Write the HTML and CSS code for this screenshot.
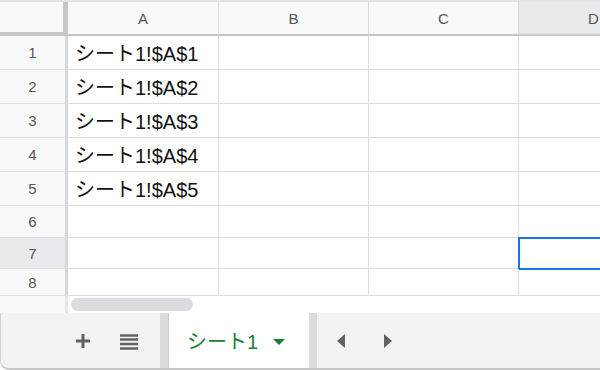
FILE: index.html
```html
<!DOCTYPE html>
<html lang="ja">
<head>
    <meta charset="UTF-8">
    <title>シート1</title>
    <link rel="stylesheet" href="styles.css">
</head>
<body>
    <div class="app">
        <div class="sheet">
            <div class="row head-row">
                <div class="corner"></div>
                <div class="col-head col-a">A</div>
                <div class="col-head">B</div>
                <div class="col-head">C</div>
                <div class="col-head col-d active">D</div>
            </div>
            <div class="row tall">
                <div class="row-head">1</div>
                <div class="cell col-a">シート1!$A$1</div>
                <div class="cell"></div>
                <div class="cell"></div>
                <div class="cell col-d"></div>
            </div>
            <div class="row tall">
                <div class="row-head">2</div>
                <div class="cell col-a">シート1!$A$2</div>
                <div class="cell"></div>
                <div class="cell"></div>
                <div class="cell col-d"></div>
            </div>
            <div class="row tall">
                <div class="row-head">3</div>
                <div class="cell col-a">シート1!$A$3</div>
                <div class="cell"></div>
                <div class="cell"></div>
                <div class="cell col-d"></div>
            </div>
            <div class="row tall">
                <div class="row-head">4</div>
                <div class="cell col-a">シート1!$A$4</div>
                <div class="cell"></div>
                <div class="cell"></div>
                <div class="cell col-d"></div>
            </div>
            <div class="row tall">
                <div class="row-head">5</div>
                <div class="cell col-a">シート1!$A$5</div>
                <div class="cell"></div>
                <div class="cell"></div>
                <div class="cell col-d"></div>
            </div>
            <div class="row r6">
                <div class="row-head">6</div>
                <div class="cell col-a"></div>
                <div class="cell"></div>
                <div class="cell"></div>
                <div class="cell col-d"></div>
            </div>
            <div class="row r7">
                <div class="row-head active">7</div>
                <div class="cell col-a"></div>
                <div class="cell"></div>
                <div class="cell"></div>
                <div class="cell col-d selected"></div>
            </div>
            <div class="row r8">
                <div class="row-head">8</div>
                <div class="cell col-a"></div>
                <div class="cell"></div>
                <div class="cell"></div>
                <div class="cell col-d"></div>
            </div>
            <div class="scroll-row">
                <div class="scroll-gutter"></div>
                <div class="scroll-track">
                    <div class="scroll-thumb"></div>
                </div>
            </div>
        </div>

        <div class="tabbar">
            <button class="tool add" title="シートを追加">
                <svg width="16" height="16" viewBox="0 0 16 16"><path d="M8 1v14M1 8h14" stroke="#5f6368" stroke-width="3" fill="none"/></svg>
            </button>
            <button class="tool list" title="すべてのシート">
                <svg width="18" height="16" viewBox="0 0 18 16"><path d="M0 1.5h18M0 5.5h18M0 10h18M0 14.5h18" stroke="#5f6368" stroke-width="2.6" fill="none"/></svg>
            </button>
            <div class="tab">
                <span class="tab-name">シート1</span>
                <svg class="caret" width="12" height="6" viewBox="0 0 12 6"><path d="M0 0h12L6 6z" fill="#188038"/></svg>
            </div>
            <div class="nav-arrows">
                <button class="tool arrow">
                    <svg width="9" height="14" viewBox="0 0 9 14"><path d="M9 0v14L1 7z" fill="#5f6368"/></svg>
                </button>
                <button class="tool arrow">
                    <svg width="9" height="14" viewBox="0 0 9 14"><path d="M0 0v14l8-7z" fill="#5f6368"/></svg>
                </button>
            </div>
        </div>
    </div>
</body>
</html>
```

FILE: styles.css
```css
body {
    margin: 0;
    width: 600px;
    height: 370px;
    overflow: hidden;
    background-color: #fff;
    font-family: 'Liberation Sans', 'Noto Sans CJK JP', sans-serif;
}
.app {
    display: flex;
    flex-direction: column;
    height: 370px;
}
.sheet {
    height: 313px;
    border-top: 2px solid #e3e3e3;
    box-sizing: border-box;
    overflow: hidden;
}
.row {
    display: flex;
    height: 34px;
}
.head-row {
    height: 34px;
}
.r6 {
    height: 32px;
}
.r7 {
    height: 31px;
}
.r8 {
    height: 26px;
}
.corner {
    flex: none;
    width: 63px;
    background-color: #f8f9fa;
    border-right: 5px solid #c4c7c5;
    border-bottom: 4px solid #c4c7c5;
}
.col-head {
    flex: none;
    width: 149px;
    background-color: #f8f9fa;
    border-right: 1px solid #dadce0;
    border-bottom: 2px solid #c4c7c5;
    display: flex;
    align-items: center;
    justify-content: center;
    font-size: 15px;
    color: #555;
}
.col-head.col-a {
    width: 150px;
}
.col-head.col-d {
    width: 150px;
    border-right: none;
    justify-content: flex-start;
    padding-left: 69px;
}
.active {
    background-color: #e8eaed;
}
.row-head {
    flex: none;
    width: 65px;
    background-color: #f8f9fa;
    border-right: 3px solid #d6d8db;
    border-bottom: 1px solid #dedede;
    display: flex;
    align-items: center;
    justify-content: center;
    font-size: 15px;
    color: #555;
}
.row-head.active {
    background-color: #e8eaed;
}
.cell {
    flex: none;
    border-right: 1px solid #dedede;
    border-bottom: 1px solid #dedede;
    display: flex;
    align-items: center;
    padding-left: 7px;
    box-sizing: border-box;
    width: 150px;
    font-size: 20px;
    color: #111;
    white-space: nowrap;
}
.cell.col-a {
    width: 151px;
}
.cell.col-d {
    width: 90px;
    border-right: none;
}
.r8 .row-head,
.r8 .cell {
    border-bottom: none;
}
.selected {
    outline: 2px solid #1a73e8;
    outline-offset: -1px;
}
.scroll-row {
    display: flex;
    height: 18px;
    border-top: 1px solid #dedede;
}
.scroll-gutter {
    width: 65px;
    background-color: #f8f9fa;
    border-right: 3px solid #e6e7e9;
}
.scroll-track {
    flex: 1;
    padding: 2px 0 0 3px;
}
.scroll-thumb {
    width: 122px;
    height: 13px;
    border-radius: 7px;
    background-color: #dadce0;
}
.tabbar {
    flex: 1;
    display: flex;
    align-items: stretch;
    background-color: #f1f3f4;
    border-bottom: 2px solid #c6c6c6;
    border-left: 1px solid #d0d0d0;
    border-bottom-left-radius: 9px;
    padding-left: 69px;
}
.tool {
    border: none;
    background: none;
    padding: 0;
    display: flex;
    align-items: center;
    justify-content: center;
}
.add {
    width: 26px;
}
.list {
    width: 38px;
    margin-left: 14px;
    padding-top: 2px;
}
.tab {
    display: flex;
    align-items: center;
    gap: 15px;
    width: 122px;
    margin-left: 12px;
    padding-left: 19px;
    background-color: #fff;
    border-left: 8px solid #d9dbdd;
    border-right: 8px solid #d9dbdd;
    box-shadow: inset 1px 0 0 #c9cbcd;
}
.tab-name {
    font-size: 20px;
    color: #188038;
}
.caret {
    margin-top: 2px;
}
.nav-arrows {
    display: flex;
    gap: 31px;
    margin-left: 15px;
    padding-top: 1px;
}
.arrow {
    width: 17px;
}
```
